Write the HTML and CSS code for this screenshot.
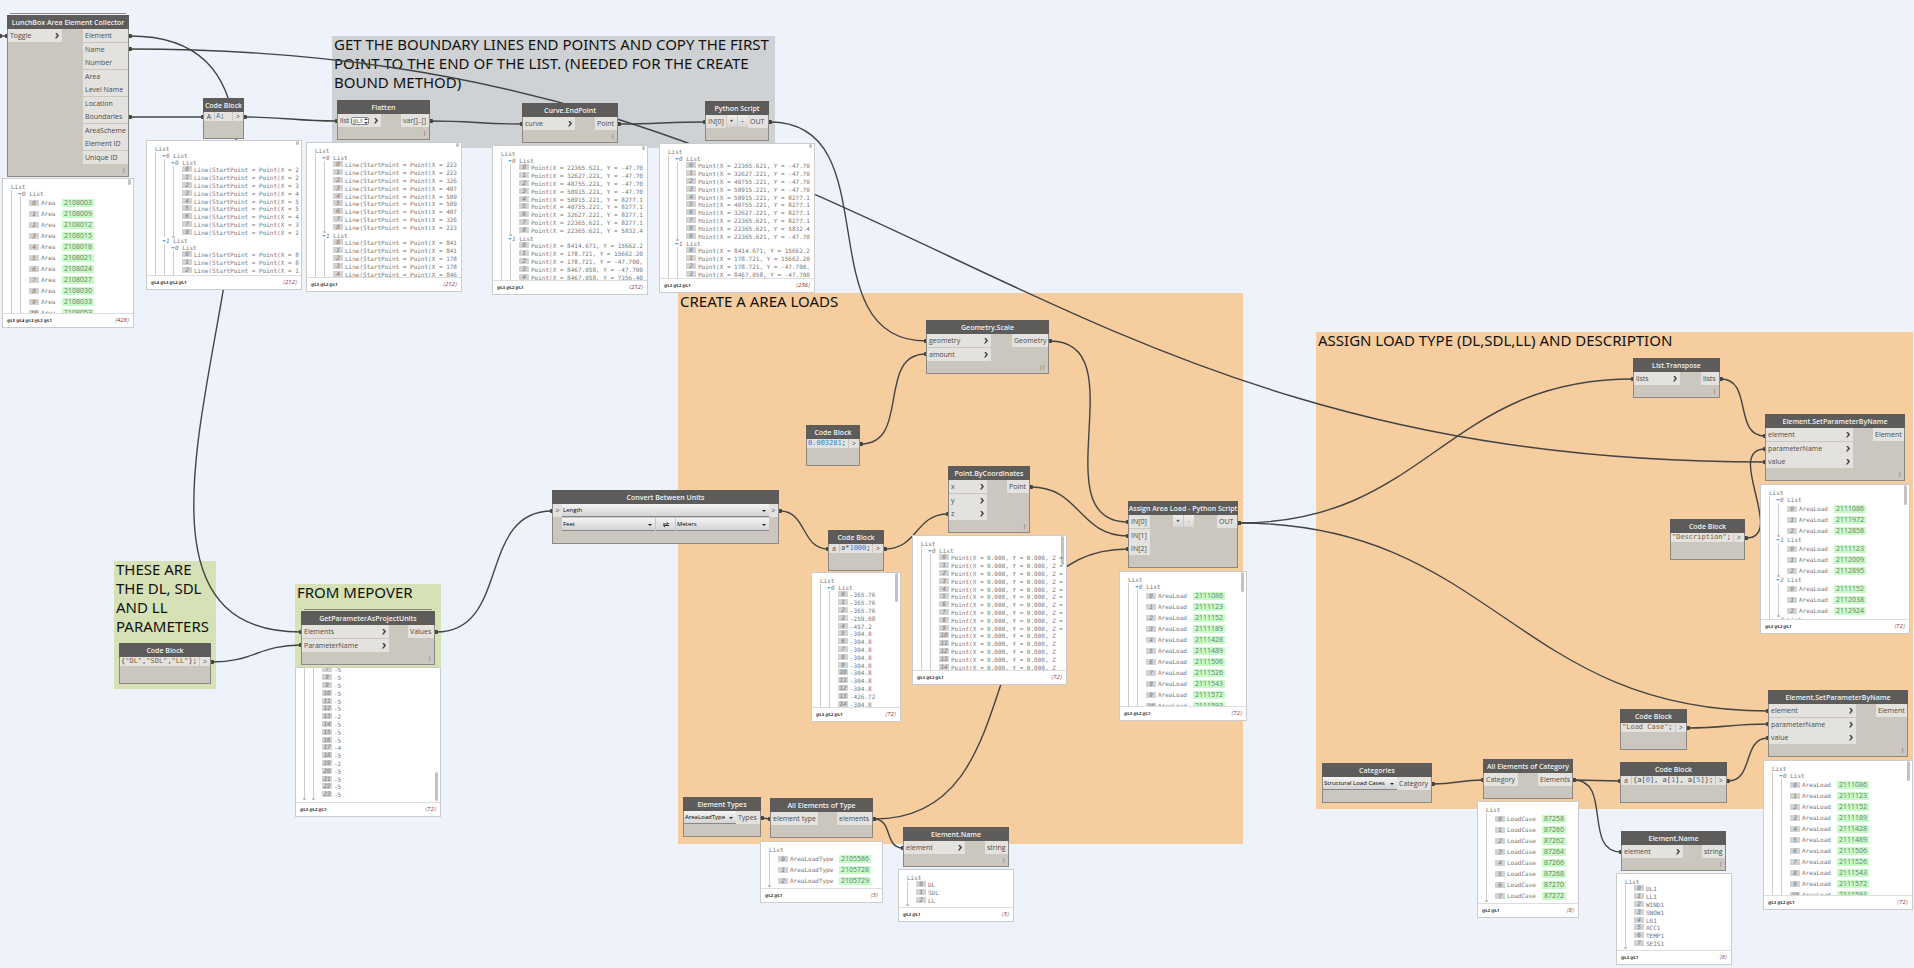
FILE: index.html
```html
<!DOCTYPE html>
<html lang="en">
<head>
<meta charset="utf-8">
<title>Area loads graph</title>
<link rel="stylesheet" href="styles.css">
</head>
<body>
<main class="canvas">
  <section class="group grey g-bound"><h2>GET THE BOUNDARY LINES END POINTS AND COPY THE FIRST POINT TO THE END OF THE LIST. (NEEDED FOR THE CREATE BOUND METHOD)</h2></section>
  <section class="group orange g-create"><h2>CREATE A AREA LOADS</h2></section>
  <section class="group orange g-assign"><h2>ASSIGN LOAD TYPE (DL,SDL,LL) AND DESCRIPTION</h2></section>
  <section class="group green g-params"><h2>THESE ARE THE DL, SDL AND LL PARAMETERS</h2></section>
  <section class="group green g-mep"><h2>FROM MEPOVER</h2></section>

  <svg class="wires" aria-hidden="true">
    <defs><marker id="dot" viewBox="0 0 4 4" refX="2" refY="2" markerWidth="4" markerHeight="4" markerUnits="userSpaceOnUse"><rect width="4" height="4" rx="1" fill="#444"/></marker></defs>
    <path d="M0 36H7"/>
    <path d="M130 36C409 36 22 632 301 632"/>
    <path d="M130 49C889 49 1006 462 1765 462"/>
    <path d="M130 117H203"/>
    <path d="M245 117C286 117 296 121 337 121"/>
    <path d="M431 121C472 121 481 124 522 124"/>
    <path d="M619 124C657 124 667 122 705 122"/>
    <path d="M770 122C891 122 805 341 926 341"/>
    <path d="M861 444C911 444 876 354 926 354"/>
    <path d="M1050 341C1138 341 1040 522 1128 522"/>
    <path d="M1031 487C1080 487 1079 536 1128 536"/>
    <path d="M874 819C1040 819 962 549 1128 549"/>
    <path d="M874 819C893 819 884 848 903 848"/>
    <path d="M762 818L770 819"/>
    <path d="M212 662C253 662 260 645 301 645"/>
    <path d="M436 632C511 632 477 511 552 511"/>
    <path d="M780 511C807 511 801 549 828 549"/>
    <path d="M885 549C918 549 915 514 948 514"/>
    <path d="M1239 523C1428 523 1444 379 1633 379"/>
    <path d="M1239 523C1492 523 1515 711 1768 711"/>
    <path d="M1721 379C1753 379 1733 436 1765 436"/>
    <path d="M1746 538C1787 538 1724 449 1765 449"/>
    <path d="M1688 728C1724 728 1732 724 1768 724"/>
    <path d="M1728 781C1754 781 1742 738 1768 738"/>
    <path d="M1574 780L1620 781"/>
    <path d="M1574 780C1612 780 1583 852 1621 852"/>
    <path d="M1433 784C1456 784 1460 780 1483 780"/>
  </svg>

  <article class="node stacked n-lunch">
    <h3>LunchBox Area Element Collector</h3>
    <div class="ports"><ul class="in"><li class="arrow">Toggle</li></ul><ul class="out"><li>Element</li><li>Name</li><li>Number</li><li>Area</li><li>Level Name</li><li>Location</li><li>Boundaries</li><li>AreaScheme</li><li>Element ID</li><li>Unique ID</li></ul></div>
    <footer>|</footer>
  </article>
  <div class="bubble b-lunch"><span class="thumb short"></span>
    <div class="tree">List<ul><li class="open"><p><i>0</i> List</p><ul class="wide">
      <li><i>0</i><span>Area</span><b>2108003</b></li><li><i>1</i><span>Area</span><b>2108009</b></li><li><i>2</i><span>Area</span><b>2108012</b></li><li><i>3</i><span>Area</span><b>2108015</b></li><li><i>4</i><span>Area</span><b>2108018</b></li><li><i>5</i><span>Area</span><b>2108021</b></li><li><i>6</i><span>Area</span><b>2108024</b></li><li><i>7</i><span>Area</span><b>2108027</b></li><li><i>8</i><span>Area</span><b>2108030</b></li><li><i>9</i><span>Area</span><b>2108033</b></li><li><i>10</i><span>Area</span><b>2108053</b></li>
    </ul></li></ul></div>
    <div class="levels"><strong>@L5 @L4 @L3 @L2 @L1</strong><em>{<mark>428</mark>}</em></div>
  </div>

  <article class="node n-codea">
    <h3>Code Block</h3>
    <div class="code"><span class="var">A</span><code><span class="num">A</span>;</code><span class="gt">&gt;</span></div>
  </article>
  <div class="bubble b-codea"><span class="thumb tiny"></span>
    <div class="tree">List<ul>
      <li class="open"><p><i>0</i> List</p><ul><li class="open"><p><i>0</i> List</p><ul class="pin">
        <li><i>0</i>Line(StartPoint = Point(X = 2</li><li><i>1</i>Line(StartPoint = Point(X = 2</li><li><i>2</i>Line(StartPoint = Point(X = 3</li><li><i>3</i>Line(StartPoint = Point(X = 4</li><li><i>4</i>Line(StartPoint = Point(X = 5</li><li><i>5</i>Line(StartPoint = Point(X = 5</li><li><i>6</i>Line(StartPoint = Point(X = 4</li><li><i>7</i>Line(StartPoint = Point(X = 3</li><li><i>8</i>Line(StartPoint = Point(X = 2</li></ul></li></ul></li>
      <li class="open"><p><i>1</i> List</p><ul><li class="open"><p><i>0</i> List</p><ul>
        <li><i>0</i>Line(StartPoint = Point(X = 8</li><li><i>1</i>Line(StartPoint = Point(X = 8</li><li><i>2</i>Line(StartPoint = Point(X = 1</li></ul></li></ul></li>
    </ul></div>
    <div class="levels"><strong>@L4 @L3 @L2 @L1</strong><em>{<mark>212</mark>}</em></div>
  </div>

  <article class="node n-flatten">
    <h3>Flatten</h3>
    <div class="ports"><ul class="in"><li class="arrow"><label for="level">list</label><input id="level" class="level" value="@L3"><svg class="spin" viewBox="0 0 6 8" aria-hidden="true"><path d="M1 3L3 1L5 3ZM1 5L3 7L5 5Z"/></svg></li></ul><ul class="out"><li>var[]..[]</li></ul></div>
    <footer>|</footer>
  </article>
  <div class="bubble b-flatten"><span class="thumb tiny"></span>
    <div class="tree">List<ul>
      <li class="open"><p><i>0</i> List</p><ul class="pin"><li><i>0</i>Line(StartPoint = Point(X = 223</li><li><i>1</i>Line(StartPoint = Point(X = 223</li><li><i>2</i>Line(StartPoint = Point(X = 326</li><li><i>3</i>Line(StartPoint = Point(X = 407</li><li><i>4</i>Line(StartPoint = Point(X = 509</li><li><i>5</i>Line(StartPoint = Point(X = 509</li><li><i>6</i>Line(StartPoint = Point(X = 407</li><li><i>7</i>Line(StartPoint = Point(X = 326</li><li><i>8</i>Line(StartPoint = Point(X = 223</li></ul></li>
      <li class="open"><p><i>1</i> List</p><ul><li><i>0</i>Line(StartPoint = Point(X = 841</li><li><i>1</i>Line(StartPoint = Point(X = 841</li><li><i>2</i>Line(StartPoint = Point(X = 178</li><li><i>3</i>Line(StartPoint = Point(X = 178</li><li><i>4</i>Line(StartPoint = Point(X = 846</li></ul></li>
    </ul></div>
    <div class="levels"><strong>@L3 @L2 @L1</strong><em>{<mark>212</mark>}</em></div>
  </div>

  <article class="node n-end">
    <h3>Curve.EndPoint</h3>
    <div class="ports"><ul class="in"><li class="arrow">curve</li></ul><ul class="out"><li>Point</li></ul></div>
    <footer>|</footer>
  </article>
  <div class="bubble b-end"><span class="thumb tiny"></span>
    <div class="tree">List<ul>
      <li class="open"><p><i>0</i> List</p><ul class="pin"><li><i>0</i>Point(X = 22365.621, Y = -47.70</li><li><i>1</i>Point(X = 32627.221, Y = -47.70</li><li><i>2</i>Point(X = 40755.221, Y = -47.70</li><li><i>3</i>Point(X = 50915.221, Y = -47.70</li><li><i>4</i>Point(X = 50915.221, Y = 8277.1</li><li><i>5</i>Point(X = 40755.221, Y = 8277.1</li><li><i>6</i>Point(X = 32627.221, Y = 8277.1</li><li><i>7</i>Point(X = 22365.621, Y = 8277.1</li><li><i>8</i>Point(X = 22365.621, Y = 5832.4</li></ul></li>
      <li class="open"><p><i>1</i> List</p><ul><li><i>0</i>Point(X = 8414.671, Y = 15662.2</li><li><i>1</i>Point(X = 178.721, Y = 15662.20</li><li><i>2</i>Point(X = 178.721, Y = -47.700,</li><li><i>3</i>Point(X = 8467.058, Y = -47.700</li><li><i>4</i>Point(X = 8467.058, Y = 7356.40</li></ul></li>
    </ul></div>
    <div class="levels"><strong>@L3 @L2 @L1</strong><em>{<mark>212</mark>}</em></div>
  </div>

  <article class="node n-py">
    <h3>Python Script</h3>
    <div class="ports"><ul class="in"><li>IN[0]</li></ul><div class="tools"><button type="button">+</button><button type="button">-</button></div><ul class="out"><li>OUT</li></ul></div>
    <footer></footer>
  </article>
  <div class="bubble b-py"><span class="thumb tiny"></span>
    <div class="tree">List<ul>
      <li class="open"><p><i>0</i> List</p><ul class="pin"><li><i>0</i>Point(X = 22365.621, Y = -47.70</li><li><i>1</i>Point(X = 32627.221, Y = -47.70</li><li><i>2</i>Point(X = 40755.221, Y = -47.70</li><li><i>3</i>Point(X = 50915.221, Y = -47.70</li><li><i>4</i>Point(X = 50915.221, Y = 8277.1</li><li><i>5</i>Point(X = 40755.221, Y = 8277.1</li><li><i>6</i>Point(X = 32627.221, Y = 8277.1</li><li><i>7</i>Point(X = 22365.621, Y = 8277.1</li><li><i>8</i>Point(X = 22365.621, Y = 5832.4</li><li><i>9</i>Point(X = 22365.621, Y = -47.70</li></ul></li>
      <li class="open"><p><i>1</i> List</p><ul><li><i>0</i>Point(X = 8414.671, Y = 15662.2</li><li><i>1</i>Point(X = 178.721, Y = 15662.20</li><li><i>2</i>Point(X = 178.721, Y = -47.700,</li><li><i>3</i>Point(X = 8467.058, Y = -47.700</li></ul></li>
    </ul></div>
    <div class="levels"><strong>@L3 @L2 @L1</strong><em>{<mark>236</mark>}</em></div>
  </div>

  <article class="node n-codedl">
    <h3>Code Block</h3>
    <div class="code"><code>{<span class="str">"DL"</span>,<span class="str">"SDL"</span>,<span class="str">"LL"</span>};</code><span class="gt">&gt;</span></div>
  </article>

  <article class="node stacked n-get">
    <h3>GetParameterAsProjectUnits</h3>
    <div class="ports"><ul class="in"><li class="arrow">Elements</li><li class="arrow">ParameterName</li></ul><ul class="out"><li>Values</li></ul></div>
    <footer>|</footer>
  </article>
  <div class="bubble b-get"><span class="thumb low"></span>
    <div class="tree scrolled"><ul class="pin"><li><ul class="pin"><li><i>7</i>-5</li><li><i>8</i>-5</li><li><i>9</i>-5</li><li><i>10</i>-5</li><li><i>11</i>-5</li><li><i>12</i>-5</li><li><i>13</i>-2</li><li><i>14</i>-5</li><li><i>15</i>-5</li><li><i>16</i>-5</li><li><i>17</i>-4</li><li><i>18</i>-5</li><li><i>19</i>-2</li><li><i>20</i>-5</li><li><i>21</i>-5</li><li><i>22</i>-5</li><li><i>23</i>-5</li></ul></li></ul></div>
    <div class="levels"><strong>@L3 @L2 @L1</strong><em>{<mark>72</mark>}</em></div>
  </div>

  <article class="node n-convert">
    <h3>Convert Between Units</h3>
    <div class="convert">
      <span class="gt">&gt;</span>
      <div class="units">
        <span class="pick full"><select aria-label="Quantity"><option>Length</option></select></span>
        <span class="pick"><select aria-label="From unit"><option>Feet</option></select></span>
        <button type="button" aria-label="Swap units"><svg viewBox="0 0 8 7"><path d="M1 3H6.5L5 1.2M7 4.5H1.5L3 6.2"/></svg></button>
        <span class="pick"><select aria-label="To unit"><option>Meters</option></select></span>
      </div>
      <span class="gt">&gt;</span>
    </div>
    <footer></footer>
  </article>

  <article class="node n-thousand">
    <h3>Code Block</h3>
    <div class="code"><span class="var">a</span><code>a*<span class="num">1000</span>;</code><span class="gt">&gt;</span></div>
  </article>
  <div class="bubble b-thousand"><span class="thumb"></span>
    <div class="tree">List<ul><li class="open"><p><i>0</i> List</p><ul><li><i>0</i>-365.76</li><li><i>1</i>-365.76</li><li><i>2</i>-365.76</li><li><i>3</i>-259.08</li><li><i>4</i>-457.2</li><li><i>5</i>-304.8</li><li><i>6</i>-304.8</li><li><i>7</i>-304.8</li><li><i>8</i>-304.8</li><li><i>9</i>-304.8</li><li><i>10</i>-304.8</li><li><i>11</i>-304.8</li><li><i>12</i>-304.8</li><li><i>13</i>-426.72</li><li><i>14</i>-304.8</li></ul></li></ul></div>
    <div class="levels"><strong>@L3 @L2 @L1</strong><em>{<mark>72</mark>}</em></div>
  </div>

  <article class="node n-scale">
    <h3>Geometry.Scale</h3>
    <div class="ports"><ul class="in"><li class="arrow">geometry</li><li class="arrow">amount</li></ul><ul class="out"><li>Geometry</li></ul></div>
    <footer>||</footer>
  </article>
  <article class="node n-factor">
    <h3>Code Block</h3>
    <div class="code"><code><span class="num">0.003281</span>;</code><span class="gt">&gt;</span></div>
  </article>

  <article class="node n-point">
    <h3>Point.ByCoordinates</h3>
    <div class="ports"><ul class="in"><li class="arrow">x</li><li class="arrow">y</li><li class="arrow">z</li></ul><ul class="out"><li>Point</li></ul></div>
    <footer>|</footer>
  </article>
  <div class="bubble b-point"><span class="thumb"></span>
    <div class="tree">List<ul><li class="open"><p><i>0</i> List</p><ul><li><i>0</i>Point(X = 0.000, Y = 0.000, Z =</li><li><i>1</i>Point(X = 0.000, Y = 0.000, Z =</li><li><i>2</i>Point(X = 0.000, Y = 0.000, Z =</li><li><i>3</i>Point(X = 0.000, Y = 0.000, Z =</li><li><i>4</i>Point(X = 0.000, Y = 0.000, Z =</li><li><i>5</i>Point(X = 0.000, Y = 0.000, Z =</li><li><i>6</i>Point(X = 0.000, Y = 0.000, Z =</li><li><i>7</i>Point(X = 0.000, Y = 0.000, Z =</li><li><i>8</i>Point(X = 0.000, Y = 0.000, Z =</li><li><i>9</i>Point(X = 0.000, Y = 0.000, Z =</li><li><i>10</i>Point(X = 0.000, Y = 0.000, Z</li><li><i>11</i>Point(X = 0.000, Y = 0.000, Z</li><li><i>12</i>Point(X = 0.000, Y = 0.000, Z</li><li><i>13</i>Point(X = 0.000, Y = 0.000, Z</li><li><i>14</i>Point(X = 0.000, Y = 0.000, Z</li></ul></li></ul></div>
    <div class="levels"><strong>@L3 @L2 @L1</strong><em>{<mark>72</mark>}</em></div>
  </div>

  <article class="node n-load">
    <h3>Assign Area Load - Python Script</h3>
    <div class="ports"><ul class="in"><li>IN[0]</li><li>IN[1]</li><li>IN[2]</li></ul><div class="tools"><button type="button">+</button><button type="button" disabled>-</button></div><ul class="out"><li>OUT</li></ul></div>
    <footer></footer>
  </article>
  <div class="bubble b-load"><span class="thumb mid"></span>
    <div class="tree">List<ul><li class="open"><p><i>0</i> List</p><ul class="wide">
      <li><i>0</i><span>AreaLoad</span><b>2111086</b></li><li><i>1</i><span>AreaLoad</span><b>2111123</b></li><li><i>2</i><span>AreaLoad</span><b>2111152</b></li><li><i>3</i><span>AreaLoad</span><b>2111189</b></li><li><i>4</i><span>AreaLoad</span><b>2111428</b></li><li><i>5</i><span>AreaLoad</span><b>2111489</b></li><li><i>6</i><span>AreaLoad</span><b>2111506</b></li><li><i>7</i><span>AreaLoad</span><b>2111526</b></li><li><i>8</i><span>AreaLoad</span><b>2111543</b></li><li><i>9</i><span>AreaLoad</span><b>2111572</b></li><li><i>10</i><span>AreaLoad</span><b>2111593</b></li>
    </ul></li></ul></div>
    <div class="levels"><strong>@L3 @L2 @L1</strong><em>{<mark>72</mark>}</em></div>
  </div>

  <article class="node n-types">
    <h3>Element Types</h3>
    <div class="ports"><span class="pick"><select aria-label="Element type"><option>AreaLoadType</option></select></span><ul class="out"><li>Types</li></ul></div>
    <footer></footer>
  </article>
  <article class="node n-alltype">
    <h3>All Elements of Type</h3>
    <div class="ports"><ul class="in"><li>element type</li></ul><ul class="out"><li>elements</li></ul></div>
    <footer></footer>
  </article>
  <div class="bubble fit b-alltype">
    <div class="tree">List<ul class="wide pin"><li><i>0</i><span>AreaLoadType</span><b>2105586</b></li><li><i>1</i><span>AreaLoadType</span><b>2105728</b></li><li><i>2</i><span>AreaLoadType</span><b>2105729</b></li></ul></div>
    <div class="levels"><strong>@L2 @L1</strong><em>{<mark>3</mark>}</em></div>
  </div>

  <article class="node n-name">
    <h3>Element.Name</h3>
    <div class="ports"><ul class="in"><li class="arrow">element</li></ul><ul class="out"><li>string</li></ul></div>
    <footer>|</footer>
  </article>
  <div class="bubble fit b-name">
    <div class="tree">List<ul class="pin"><li><i>0</i>DL</li><li><i>1</i>SDL</li><li><i>2</i>LL</li></ul></div>
    <div class="levels"><strong>@L2 @L1</strong><em>{<mark>3</mark>}</em></div>
  </div>

  <article class="node n-transpose">
    <h3>List.Transpose</h3>
    <div class="ports"><ul class="in"><li class="arrow">lists</li></ul><ul class="out"><li>lists</li></ul></div>
    <footer>|</footer>
  </article>
  <article class="node n-set1">
    <h3>Element.SetParameterByName</h3>
    <div class="ports"><ul class="in"><li class="arrow">element</li><li class="arrow">parameterName</li><li class="arrow">value</li></ul><ul class="out"><li>Element</li></ul></div>
    <footer>|</footer>
  </article>
  <div class="bubble b-set1"><span class="thumb mid"></span>
    <div class="tree">List<ul>
      <li class="open"><p><i>0</i> List</p><ul class="wide pin"><li><i>0</i><span>AreaLoad</span><b>2111086</b></li><li><i>1</i><span>AreaLoad</span><b>2111972</b></li><li><i>2</i><span>AreaLoad</span><b>2112858</b></li></ul></li>
      <li class="open"><p><i>1</i> List</p><ul class="wide pin"><li><i>0</i><span>AreaLoad</span><b>2111123</b></li><li><i>1</i><span>AreaLoad</span><b>2112009</b></li><li><i>2</i><span>AreaLoad</span><b>2112895</b></li></ul></li>
      <li class="open"><p><i>2</i> List</p><ul class="wide pin"><li><i>0</i><span>AreaLoad</span><b>2111152</b></li><li><i>1</i><span>AreaLoad</span><b>2112038</b></li><li><i>2</i><span>AreaLoad</span><b>2112924</b></li></ul></li>
      <li class="open"><p><i>3</i> List</p></li>
    </ul></div>
    <div class="levels"><strong>@L3 @L2 @L1</strong><em>{<mark>72</mark>}</em></div>
  </div>
  <article class="node n-desc">
    <h3>Code Block</h3>
    <div class="code"><code><span class="str">"Description"</span>;</code><span class="gt">&gt;</span></div>
  </article>

  <article class="node n-cats">
    <h3>Categories</h3>
    <div class="ports"><span class="pick"><select aria-label="Category"><option>Structural Load Cases</option></select></span><ul class="out"><li>Category</li></ul></div>
    <footer></footer>
  </article>
  <article class="node n-allcat">
    <h3>All Elements of Category</h3>
    <div class="ports"><ul class="in"><li>Category</li></ul><ul class="out"><li>Elements</li></ul></div>
    <footer></footer>
  </article>
  <div class="bubble fit b-allcat">
    <div class="tree">List<ul class="wide pin"><li><i>0</i><span>LoadCase</span><b>87258</b></li><li><i>1</i><span>LoadCase</span><b>87260</b></li><li><i>2</i><span>LoadCase</span><b>87262</b></li><li><i>3</i><span>LoadCase</span><b>87264</b></li><li><i>4</i><span>LoadCase</span><b>87266</b></li><li><i>5</i><span>LoadCase</span><b>87268</b></li><li><i>6</i><span>LoadCase</span><b>87270</b></li><li><i>7</i><span>LoadCase</span><b>87272</b></li></ul></div>
    <div class="levels"><strong>@L2 @L1</strong><em>{<mark>8</mark>}</em></div>
  </div>

  <article class="node n-case">
    <h3>Code Block</h3>
    <div class="code"><code><span class="str">"Load Case"</span>;</code><span class="gt">&gt;</span></div>
  </article>
  <article class="node n-pick">
    <h3>Code Block</h3>
    <div class="code"><span class="var">a</span><code>{a[<span class="num">0</span>], a[<span class="num">1</span>], a[<span class="num">5</span>]};</code><span class="gt">&gt;</span></div>
  </article>
  <article class="node n-name2">
    <h3>Element.Name</h3>
    <div class="ports"><ul class="in"><li class="arrow">element</li></ul><ul class="out"><li>string</li></ul></div>
    <footer>|</footer>
  </article>
  <div class="bubble fit b-name2">
    <div class="tree">List<ul class="pin"><li><i>0</i>DL1</li><li><i>1</i>LL1</li><li><i>2</i>WIND1</li><li><i>3</i>SNOW1</li><li><i>4</i>LR1</li><li><i>5</i>ACC1</li><li><i>6</i>TEMP1</li><li><i>7</i>SEIS1</li></ul></div>
    <div class="levels"><strong>@L2 @L1</strong><em>{<mark>8</mark>}</em></div>
  </div>

  <article class="node n-set2">
    <h3>Element.SetParameterByName</h3>
    <div class="ports"><ul class="in"><li class="arrow">element</li><li class="arrow">parameterName</li><li class="arrow">value</li></ul><ul class="out"><li>Element</li></ul></div>
    <footer>|</footer>
  </article>
  <div class="bubble b-set2"><span class="thumb mid"></span>
    <div class="tree">List<ul><li class="open"><p><i>0</i> List</p><ul class="wide">
      <li><i>0</i><span>AreaLoad</span><b>2111086</b></li><li><i>1</i><span>AreaLoad</span><b>2111123</b></li><li><i>2</i><span>AreaLoad</span><b>2111152</b></li><li><i>3</i><span>AreaLoad</span><b>2111189</b></li><li><i>4</i><span>AreaLoad</span><b>2111428</b></li><li><i>5</i><span>AreaLoad</span><b>2111489</b></li><li><i>6</i><span>AreaLoad</span><b>2111506</b></li><li><i>7</i><span>AreaLoad</span><b>2111526</b></li><li><i>8</i><span>AreaLoad</span><b>2111543</b></li><li><i>9</i><span>AreaLoad</span><b>2111572</b></li><li><i>10</i><span>AreaLoad</span><b>2111593</b></li>
    </ul></li></ul></div>
    <div class="levels"><strong>@L3 @L2 @L1</strong><em>{<mark>72</mark>}</em></div>
  </div>
</main>
</body>
</html>
```
FILE: styles.css
```css
* { box-sizing: border-box; margin: 0; padding: 0; }
body { font-family: "Open Sans", "Noto Sans", sans-serif; font-size: 7px; color: #4c4c4c; background: #edf2fb; }
ul { list-style: none; }
.canvas { position: relative; min-height: 100vh; overflow: hidden; }
.wires { position: absolute; inset: 0; width: 100%; height: 100%; }
.wires > path { fill: none; stroke: #444; stroke-width: 1.4; marker-start: url(#dot); marker-end: url(#dot); }

/* groups */
.group { position: absolute; padding: 0 2px; }
.group h2 { margin-top: -1px; font: 400 15px/19px "Noto Sans", "Open Sans", sans-serif; color: #111; }
.grey { background: #cfd2d4; }
.orange { background: #f6cd9f; }
.green { background: #d6e2b5; }
.g-bound { left: 332px; top: 36px; width: 443px; height: 112px; }
.g-create { left: 678px; top: 293px; width: 565px; height: 551px; }
.g-assign { left: 1316px; top: 332px; width: 597px; height: 477px; }
.g-params { left: 114px; top: 561px; width: 102px; height: 128px; }
.g-mep { left: 295px; top: 584px; width: 146px; height: 83px; }

/* nodes */
.node { position: absolute; background: #cbc6be; border: 1px solid #8b8883; border-top: 0; }
.node h3 { height: 14px; margin: 0 -1px; background: #5d5c5a; color: #f2f2f2; font-weight: 600; font-size: 7px; line-height: 16px; text-align: center; white-space: nowrap; }
.stacked::before { content: ""; position: absolute; left: 2px; right: 2px; top: -2px; height: 1px; background: #8b8883; }
.node footer { height: 12px; padding-right: 3px; text-align: right; font-size: 5px; line-height: 12px; color: #444; }
.ports { display: flex; justify-content: space-between; }
.in { width: var(--in); }
.out { width: var(--out); }
.ports li { display: flex; align-items: center; height: 13px; padding: 0 2px; background: #e3e2de; line-height: 13px; white-space: nowrap; }
.ports li:nth-child(odd):not(:last-child) { margin-bottom: 1px; }
.arrow::after { content: ""; width: 4px; height: 6px; margin: 0 1px 0 auto; background: #444; clip-path: polygon(0 0, 40% 0, 100% 50%, 40% 100%, 0 100%, 50% 50%); }
.tools { display: flex; gap: 1px; margin: 0 auto; }
.tools button { width: 10px; height: 12px; border: 0; background: linear-gradient(#eee, #d8d6d2); color: #222; font: 700 6px/12px "Open Sans", sans-serif; }
.tools button:disabled { color: #aaa; }
.level { width: 18px; height: 8px; margin-left: 2px; border: 1px solid #888; border-radius: 2px; background: #fff; color: #444; font: 5px/6px "Open Sans", sans-serif; }
.spin { width: 6px; height: 8px; margin-left: -6px; fill: #444; }
.code { display: flex; height: 9px; margin-bottom: 17px; line-height: 9px; }
.code > * { background: #e3e2de; }
.code code { flex: 1; padding-left: 1px; font: 7px/9px "DejaVu Sans Mono", "Liberation Mono", monospace; color: #444; white-space: nowrap; }
.var { width: 10px; margin-right: 1px; text-align: center; }
.gt { width: 10px; margin-left: 1px; background: #e3e2de; text-align: center; font-size: 7px; }
.code .num { color: #2a86d8; }
.code .str { color: #8a5a35; }
.pick { position: relative; display: block; flex: 1; height: 13px; }
.pick::after { content: ""; position: absolute; right: 3px; top: 6px; border: solid transparent; border-width: 2px 2px 0; border-top-color: #222; }
.pick select { appearance: none; display: block; width: 100%; height: 13px; padding: 0 1px; border: 0; border-bottom: 1px solid #888; border-radius: 0; background: linear-gradient(#f4f4f4, #d4d4d4); color: #000; font: 6px/12px "Open Sans", sans-serif; }
.convert { display: flex; }
.convert .gt { width: 9px; height: 13px; margin: 0; line-height: 13px; }
.units { flex: 1; display: grid; grid-template-columns: 1fr 19px 1fr; gap: 1px; }
.units .full { grid-column: 1 / -1; }
.units button { display: grid; place-items: center; border: 0; border-bottom: 1px solid #888; background: linear-gradient(#f4f4f4, #d4d4d4); }
.units svg { width: 8px; height: 7px; fill: none; stroke: #333; stroke-width: 1; }

.n-lunch { left: 7px; top: 15px; width: 122px; --in: 54px; --out: 45px; }
.n-codea { left: 203px; top: 98px; width: 41px; }
.n-flatten { left: 337px; top: 100px; width: 93px; --in: 43px; --out: 28px; }
.n-end { left: 522px; top: 103px; width: 96px; --in: 52px; --out: 22px; }
.n-py { left: 705px; top: 101px; width: 64px; --in: 20px; --out: 20px; }
.n-codedl { left: 119px; top: 643px; width: 92px; }
.n-get { left: 301px; top: 611px; width: 134px; --in: 87px; --out: 26px; }
.n-convert { left: 552px; top: 490px; width: 227px; }
.n-thousand { left: 828px; top: 530px; width: 56px; }
.n-scale { left: 926px; top: 320px; width: 123px; --in: 64px; --out: 36px; }
.n-factor { left: 806px; top: 425px; width: 54px; }
.n-point { left: 948px; top: 466px; width: 82px; --in: 38px; --out: 22px; }
.n-load { left: 1128px; top: 501px; width: 110px; --in: 21px; --out: 20px; }
.n-types { left: 683px; top: 797px; width: 78px; --out: 24px; }
.n-alltype { left: 770px; top: 798px; width: 103px; --in: 47px; --out: 35px; }
.n-name { left: 903px; top: 827px; width: 106px; --in: 61px; --out: 23px; }
.n-transpose { left: 1633px; top: 358px; width: 87px; --in: 46px; --out: 18px; }
.n-set1 { left: 1765px; top: 414px; width: 140px; --in: 87px; --out: 31px; }
.n-desc { left: 1670px; top: 519px; width: 75px; }
.n-cats { left: 1322px; top: 763px; width: 110px; --out: 34px; }
.n-allcat { left: 1483px; top: 759px; width: 90px; --in: 34px; --out: 34px; }
.n-case { left: 1620px; top: 709px; width: 67px; }
.n-pick { left: 1620px; top: 762px; width: 107px; }
.n-name2 { left: 1621px; top: 831px; width: 105px; --in: 61px; --out: 23px; }
.n-set2 { left: 1768px; top: 690px; width: 140px; --in: 87px; --out: 31px; }

/* preview bubbles */
.bubble { position: absolute; background: #fff; border: 1px solid #ccc; }
.tree { height: 134px; padding: 4px 0 0 8px; overflow: hidden; font: 6px/7px "DejaVu Sans Mono", "Liberation Mono", monospace; color: #777; white-space: nowrap; }
.fit .tree { height: auto; padding-bottom: 2px; }
.scrolled { display: flex; flex-direction: column; justify-content: flex-end; padding-bottom: 3px; }
.tree ul { position: relative; border-left: 1px solid #ccc; }
.tree .pin::after { content: ""; position: absolute; left: -2px; bottom: -1px; width: 3px; height: 2px; border-radius: 1px; background: #bbb; }
.tree li { height: 8px; padding-left: 8px; line-height: 8px; }
.tree li:nth-child(5n) { height: 7px; }
.tree .open, .scrolled > ul > li { height: auto; }
.tree .open > p { position: relative; height: 7px; margin-left: 2px; line-height: 7px; }
.tree .open > p::before { content: ""; position: absolute; left: -4px; top: 3px; border: solid transparent; border-width: 2px 2px 0; border-top-color: #5aa7e0; }
.tree i { display: inline-block; min-width: 10px; height: 6px; margin-right: 2px; padding: 0 1px; background: #d3d3d3; text-align: center; line-height: 6px; vertical-align: top; }
.tree .open > p i { min-width: 0; height: 7px; margin: 0; padding: 0; background: none; line-height: 7px; }
.tree .wide li { display: flex; align-items: center; height: 11px; }
.tree .wide span { width: var(--label); }
.tree b { padding: 0 2px; background: #c6fcc6; font: 7px/8px "Open Sans", sans-serif; color: #777; }
.levels { display: flex; justify-content: space-between; height: 14px; padding: 0 4px; border-top: 1px solid #ddd; line-height: 13px; }
.levels strong { font-size: 4px; color: #222; }
.levels em { font-size: 6px; color: #888; }
.levels mark { background: none; color: #a01818; }
.thumb { position: absolute; right: 2px; top: 0; width: 3px; height: 29px; border-radius: 2px; background: #c2c2c2; }
.thumb.mid { height: 20px; }
.thumb.short { height: 6px; }
.thumb.tiny { height: 4px; }
.thumb.low { top: 104px; }

.b-lunch { left: 2px; top: 178px; width: 132px; --label: 21px; }
.b-codea { left: 146px; top: 140px; width: 156px; }
.b-flatten { left: 306px; top: 142px; width: 156px; }
.b-end { left: 492px; top: 145px; width: 156px; }
.b-py { left: 659px; top: 143px; width: 156px; }
.b-get { left: 295px; top: 667px; width: 146px; }
.b-thousand { left: 811px; top: 572px; width: 90px; }
.b-point { left: 912px; top: 535px; width: 155px; }
.b-load { left: 1119px; top: 571px; width: 128px; --label: 35px; }
.b-alltype { left: 760px; top: 841px; width: 123px; --label: 49px; }
.b-name { left: 898px; top: 869px; width: 116px; }
.b-set1 { left: 1760px; top: 484px; width: 150px; --label: 35px; }
.b-allcat { left: 1477px; top: 801px; width: 102px; --label: 35px; }
.b-name2 { left: 1616px; top: 873px; width: 116px; }
.b-set2 { left: 1763px; top: 760px; width: 150px; --label: 35px; }
```
